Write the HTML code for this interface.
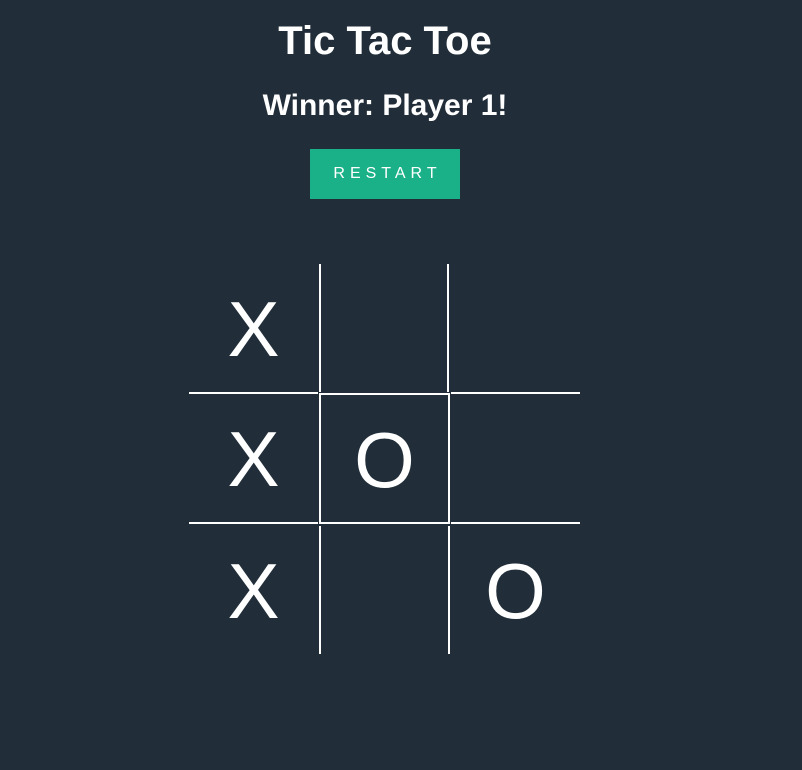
<!DOCTYPE html>
<html><head><style>
body{margin:0;background:#212e3a;width:802px;height:770px;font-family:"Liberation Sans",Arial,sans-serif;color:#fff;position:relative;overflow:hidden}
.t{position:absolute;left:0;width:770px;text-align:center;font-weight:bold}
.btn{position:absolute;left:310px;top:149px;width:150px;height:50px;background:#1ab188;color:#fff;font-size:16px;letter-spacing:5px;line-height:50px;text-align:center;text-indent:5px}
.c{position:absolute;box-sizing:border-box;width:130px;height:130px;font-size:78px;line-height:130px;text-align:center;border:0 solid #fff}
</style></head><body>
<div class="t" style="top:19px;font-size:40px">Tic Tac Toe</div>
<div class="t" style="top:89px;font-size:30px">Winner: Player 1!</div>
<div class="btn">RESTART</div>
<div class="c" style="left:189px;top:264px;border-bottom-width:2px;width:129px">X</div>
<div class="c" style="left:319px;top:264px;border-left-width:2px;border-right-width:2px;height:128px"></div>
<div class="c" style="left:451px;top:264px;border-bottom-width:2px;width:129px"></div>
<div class="c" style="left:189px;top:394px;border-bottom-width:2px;width:129px">X</div>
<div class="c" style="left:319px;top:393px;border-width:2px;width:131px;height:131px">O</div>
<div class="c" style="left:451px;top:394px;border-bottom-width:2px;width:129px"></div>
<div class="c" style="left:189px;top:526px;width:129px">X</div>
<div class="c" style="left:319px;top:526px;border-left-width:2px;border-right-width:2px;width:131px;height:128px"></div>
<div class="c" style="left:451px;top:526px;width:129px">O</div>
</body></html>
